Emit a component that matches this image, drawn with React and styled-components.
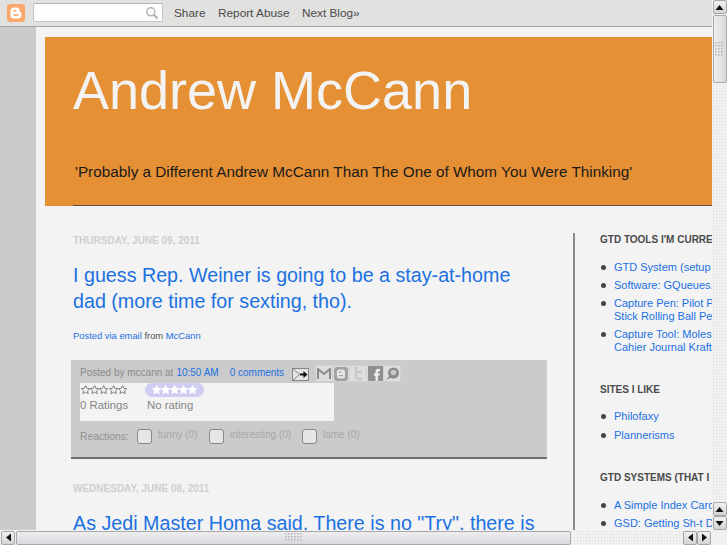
import React from "react";
import styled, { createGlobalStyle } from "styled-components";

const Global = createGlobalStyle`
  html, body { margin: 0; padding: 0; background: #f3f3f3; }
  body { font-family: "Liberation Sans", Arial, sans-serif; }
  a { text-decoration: none; color: inherit; }
`;

const Screen = styled.div`
  position: relative;
  width: 727px;
  height: 545px;
  overflow: hidden;
  display: flex;
  flex-direction: column;
`;

const Navbar = styled.div`
  flex: 0 0 27px;
  box-sizing: border-box;
  height: 27px;
  background: #e1e1e0;
  border-bottom: 1px solid #a2a2a2;
  display: flex;
  align-items: center;
  padding: 0 0 1px 7px;
  color: #4a4a4a;
  font-size: 11.8px;
`;

const Logo = styled.svg`
  width: 18px;
  height: 18px;
  flex: none;
  margin-right: 8px;
`;

const Search = styled.div`
  box-sizing: border-box;
  width: 130px;
  height: 19px;
  background: #fdfdfd;
  border: 1px solid #c4c4c4;
  border-top-color: #b4b4b4;
  border-radius: 2px;
  display: flex;
  justify-content: flex-end;
  align-items: center;
  padding-right: 3px;
  margin-right: 11px;
`;

const NavLink = styled.a`
  margin-right: 12.5px;
  white-space: nowrap;
`;

const Body = styled.div`
  flex: 1;
  display: flex;
  min-height: 0;
`;

const Gutter = styled.div`
  flex: 0 0 36px;
  background: #cbcbcb;
`;

const Page = styled.div`
  flex: 1;
  background: #f3f3f3;
  padding: 10px 0 0 9px;
  min-width: 0;
  overflow: hidden;
`;

const Header = styled.header`
  background: #e69035;
  height: 169px;
  color: #fff;
  display: flex;
  flex-direction: column;
  padding-left: 28px;
`;

const BlogTitle = styled.h1`
  margin: 17px 0 0;
  font-size: 54px;
  line-height: 72px;
  font-weight: 400;
  color: #f3f3f3;
  white-space: nowrap;
`;

const Tagline = styled.p`
  margin: 37px 0 0 2px;
  font-size: 15.3px;
  line-height: 18px;
  color: #1a1a1a;
  white-space: nowrap;
`;

const HeaderRule = styled.div`
  margin-top: auto;
  height: 1px;
  background: #5c5046;
`;

const Columns = styled.div`
  display: flex;
  align-items: flex-start;
  padding-left: 26px;
`;

const Main = styled.main`
  flex: 0 0 476px;
  width: 476px;
  padding-top: 28px;
`;

const DateLine = styled.h2`
  margin: ${(p) => p.$top || 0}px 0 0 2px;
  font-size: 10px;
  line-height: 13px;
  font-weight: 700;
  color: #cfcfcf;
  text-transform: uppercase;
`;

const PostTitle = styled.h3`
  margin: 15px 0 0 2px;
  width: 470px;
  font-size: 19.7px;
  line-height: 26px;
  font-weight: 400;
  color: #1b71e2;
`;

const Via = styled.p`
  margin: 15px 0 0 2px;
  font-size: 9.4px;
  line-height: 13px;
  color: #555;
`;

const Blue = styled.a`
  color: #1b71e2;
`;

const Footer = styled.div`
  box-sizing: border-box;
  height: 99px;
  margin-top: 18px;
  padding: 3px 9px 0;
  background: #cbcbcb;
  border-bottom: 2px solid #6e6e6e;
  color: #8a8a8a;
`;

const MetaRow = styled.div`
  display: flex;
  align-items: center;
  height: 19px;
  font-size: 10px;
  white-space: nowrap;
`;

const MetaLink = styled(Blue)`
  margin-left: ${(p) => p.$gap}px;
`;

const Envelope = styled.svg`
  width: 17px;
  height: 13px;
  margin: 3px 7px 0 8px;
  flex: none;
`;

const ShareGroup = styled.div`
  display: flex;
  margin-top: 2px;
`;

const ShareButton = styled.span`
  box-sizing: border-box;
  width: 18px;
  height: 17px;
  display: flex;
  align-items: center;
  justify-content: center;
  background: #dedede;
  border: 1px solid #d0d0d0;
  margin-left: -1px;
`;

const RatingBox = styled.div`
  box-sizing: border-box;
  width: 254px;
  height: 38px;
  background: #f3f3f3;
  display: grid;
  grid-template-columns: 65px auto;
  padding: 0;
  font-size: 11.4px;
  line-height: 16px;
  color: #858585;
  align-content: start;
  margin-top: 1px;
`;

const Stars = styled.div`
  display: flex;
  align-items: center;
  height: 14px;
  padding-left: 1px;
`;

const Pill = styled.div`
  display: flex;
  align-items: center;
  justify-content: center;
  width: 59px;
  height: 14px;
  border-radius: 7px;
  background: #cfcdf2;
`;

const RatingLabel = styled.span`
  margin-left: ${(p) => p.$left || 0}px;
`;

const Reactions = styled.div`
  display: flex;
  align-items: center;
  height: 16px;
  margin-top: 7px;
  font-size: 10.3px;
  white-space: nowrap;
`;

const ReactionsLabel = styled.span`
  width: 57px;
  color: #909090;
  margin-top: 1px;
`;

const Check = styled.span`
  box-sizing: border-box;
  width: 15px;
  height: 15px;
  border: 1px solid #888;
  border-radius: 3px;
  background: #e6e6e6;
  margin-right: 6px;
  margin-top: 1px;
  flex: none;
`;

const ReactionText = styled.span`
  width: ${(p) => p.$w}px;
  font-size: 10px;
  color: #a8a8a8;
  margin-top: -3px;
`;

const Sidebar = styled.aside`
  flex: none;
  margin: 27px 0 0 26px;
  padding: 0 0 0 25px;
  border-left: 2px solid #8c8c8c;
  white-space: nowrap;
`;

const SideHeading = styled.h4`
  margin: ${(p) => p.$top}px 0 0;
  font-size: 10px;
  line-height: 13px;
  font-weight: 700;
  color: #4a4a4a;
  text-transform: uppercase;
`;

const SideList = styled.ul`
  list-style: none;
  margin: ${(p) => p.$top}px 0 0;
  padding: 0;
`;

const SideItem = styled.li`
  position: relative;
  padding-left: 14px;
  margin-bottom: ${(p) => p.$gap}px;
  font-size: 11px;
  line-height: 13px;
  color: #1b71e2;
  &::before {
    content: "";
    position: absolute;
    left: 0.5px;
    top: 4px;
    width: 5px;
    height: 5px;
    border-radius: 50%;
    background: #444;
  }
`;

/* Scrollbars sit over the page */
const VTrack = styled.div`
  position: absolute;
  right: 0;
  top: 0;
  bottom: 0;
  width: 15px;
  background-color: #f1f1f1;
  background-image: radial-gradient(#dcdcdc 0.6px, transparent 0.7px);
  background-size: 3px 3px;
  display: flex;
  flex-direction: column;
  align-items: center;
`;

const HTrack = styled.div`
  position: absolute;
  left: 0;
  bottom: 0;
  right: 15px;
  height: 15px;
  background-color: #f1f1f1;
  background-image: radial-gradient(#dcdcdc 0.6px, transparent 0.7px);
  background-size: 3px 3px;
  display: flex;
  align-items: center;
  padding-left: 1px;
`;

const Corner = styled.div`
  position: absolute;
  right: 0;
  bottom: 0;
  width: 15px;
  height: 15px;
  background: #f1f1f1;
`;

const ArrowButton = styled.div`
  box-sizing: border-box;
  width: 14px;
  height: 14px;
  flex: none;
  border: 1px solid #a6a6a6;
  border-radius: 2px;
  background: linear-gradient(#f1f1f1, #d4d4d4);
  display: flex;
  align-items: center;
  justify-content: center;
  margin-bottom: ${(p) => p.$mb || 0}px;
  margin-right: ${(p) => p.$mr || 0}px;
`;

const VThumb = styled.div`
  box-sizing: border-box;
  width: 14px;
  height: 68px;
  margin-top: 1px;
  border: 1px solid #a9a9a9;
  border-radius: 2px;
  background: linear-gradient(90deg, #eeeeef, #d9d9dd);
  display: flex;
  align-items: center;
  justify-content: center;
`;

const HThumb = styled.div`
  box-sizing: border-box;
  width: 555px;
  height: 14px;
  margin-left: 1px;
  border: 1px solid #a9a9a9;
  border-radius: 2px;
  background: linear-gradient(#eeeeef, #d9d9dd);
  display: flex;
  align-items: center;
  justify-content: center;
`;

const Grip = styled.svg`
  flex: none;
`;

const Spring = styled.div`
  flex: 1;
`;

const StarIcon = ({ fill, stroke }) => (
  <svg width="9.2" height="9.4" viewBox="0 0 20 20">
    <path
      d="M10 1l2.8 5.9 6.4.8-4.7 4.4 1.2 6.4L10 15.4l-5.7 3.1 1.2-6.4L.8 7.7l6.4-.8z"
      fill={fill}
      stroke={stroke}
      strokeWidth="2"
      strokeLinejoin="round"
    />
  </svg>
);

const Arrow = ({ dir }) => {
  const d = {
    up: "M4.5 2 L8.5 7 L0.5 7 Z",
    down: "M4.5 7 L8.5 2 L0.5 2 Z",
    left: "M2 4.5 L7 0.5 L7 8.5 Z",
    right: "M7 4.5 L2 0.5 L2 8.5 Z",
  }[dir];
  return (
    <svg width="9" height="9" viewBox="0 0 9 9">
      <path d={d} fill="#111" />
    </svg>
  );
};

const gripDots = (cols, rows) => {
  const out = [];
  for (let r = 0; r < rows; r++)
    for (let c = 0; c < cols; c++)
      out.push(<rect key={`${r}-${c}`} x={c * 3} y={r * 3} width="1.5" height="1.5" fill="#b5b5b8" />);
  return out;
};

const posts = {
  tools: [
    ["GTD System (setup guide)"],
    ["Software: GQueues.com for tasks"],
    ["Capture Pen: Pilot Precise V5", "Stick Rolling Ball Pen"],
    ["Capture Tool: Moleskine", "Cahier Journal Kraft"],
  ],
  sites: [["Philofaxy"], ["Plannerisms"]],
  systems: [["A Simple Index Card System"], ["GSD: Getting Sh-t Done"]],
};

const Items = ({ items, gap = 5, top = 15 }) => (
  <SideList $top={top}>
    {items.map((lines) => (
      <SideItem key={lines[0]} $gap={gap}>
        {lines.map((l, i) => (
          <React.Fragment key={l}>
            {i > 0 && <br />}
            {l}
          </React.Fragment>
        ))}
      </SideItem>
    ))}
  </SideList>
);

export default function App() {
  return (
    <Screen>
      <Global />
      <Navbar>
        <Logo viewBox="0 0 18 18">
          <rect width="18" height="18" rx="3" fill="#fda76c" />
          <path
            d="M6.5 3.5h3.2c1.8 0 3 1.2 3 2.8v.9c0 .5.4.8.8.8.5 0 .9.4.9 1v2.6c0 1.7-1.4 3-3.1 3H6.5c-1.7 0-3-1.3-3-3v-5c0-1.7 1.3-3.1 3-3.100z"
            fill="#fff"
          />
          <rect x="6" y="6" width="3.600" height="1.500" rx=".7" fill="#fda76c" />
          <rect x="6" y="10.200" width="6" height="1.500" rx=".7" fill="#fda76c" />
        </Logo>
        <Search>
          <svg width="14" height="14" viewBox="0 0 14 14" fill="none" stroke="#b4b4b4">
            <circle cx="5.800" cy="5.800" r="4" strokeWidth="1.500" />
            <path d="M8.800 8.800 L12.500 12.500" strokeWidth="2.200" />
          </svg>
        </Search>
        <NavLink>Share</NavLink>
        <NavLink>Report Abuse</NavLink>
        <NavLink>Next Blog»</NavLink>
      </Navbar>

      <Body>
        <Gutter />
        <Page>
          <Header>
            <BlogTitle>Andrew McCann</BlogTitle>
            <Tagline>'Probably a Different Andrew McCann Than The One of Whom You Were Thinking'</Tagline>
            <HeaderRule />
          </Header>
          <Columns>
            <Main>
              <DateLine>Thursday, June 09, 2011</DateLine>
              <PostTitle>I guess Rep. Weiner is going to be a stay-at-home dad (more time for sexting, tho).</PostTitle>
              <Via>
                <Blue>Posted via email</Blue> from <Blue>McCann</Blue>
              </Via>
              <Footer>
                <MetaRow>
                  Posted by mccann at
                  <MetaLink $gap={3}>10:50 AM</MetaLink>
                  <MetaLink $gap={11}>0 comments</MetaLink>
                  <Envelope viewBox="0 0 17 13">
                    <rect x=".5" y=".5" width="16" height="12" fill="#e4e4e4" stroke="#858585" />
                    <path d="M1 1l7 5.500M1 12l6-5" fill="none" stroke="#858585" />
                    <path d="M8 5.500h3.500V3l4 3.500-4 3.500V7.500H8z" fill="#111" />
                  </Envelope>
                  <ShareGroup>
                    <ShareButton>
                      <svg width="14" height="11" viewBox="0 0 14 11" fill="none" stroke="#8b8b8b" strokeWidth="2">
                        <path d="M1 11V1l6 5 6-5v10" />
                      </svg>
                    </ShareButton>
                    <ShareButton>
                      <svg width="14" height="14" viewBox="0 0 14 14">
                        <rect width="14" height="14" rx="3" fill="#a2a2a2" />
                        <rect x="3" y="2.500" width="8" height="9" rx="2.500" fill="#e6e6e6" />
                        <rect x="5" y="4.700" width="2.500" height="1.200" fill="#a2a2a2" />
                        <rect x="5" y="8" width="4" height="1.200" fill="#a2a2a2" />
                      </svg>
                    </ShareButton>
                    <ShareButton>
                      <svg width="10" height="14" viewBox="0 0 10 14" fill="none" stroke="#c8c8c8" strokeWidth="2.600">
                        <path d="M3 0v9c0 2 1 3 3 3h3M3 5h6" />
                      </svg>
                    </ShareButton>
                    <ShareButton>
                      <svg width="15" height="15" viewBox="0 0 15 15">
                        <rect width="15" height="15" rx="1" fill="#8f8f8f" />
                        <path d="M12 4H10.500C9.300 4 8.700 4.700 8.700 6V15M6 8.500h5.500" fill="none" stroke="#ececec" strokeWidth="2.400" />
                      </svg>
                    </ShareButton>
                    <ShareButton>
                      <svg width="15" height="14" viewBox="0 0 15 14">
                        <circle cx="8.500" cy="6" r="5.500" fill="#8b8b8b" />
                        <circle cx="8.500" cy="5.500" r="2.800" fill="#c9c9c9" />
                        <path d="M1 13l4-5 2 2z" fill="#8b8b8b" />
                      </svg>
                    </ShareButton>
                  </ShareGroup>
                </MetaRow>
                <RatingBox>
                  <Stars>
                    {[0, 1, 2, 3, 4].map((i) => (
                      <StarIcon key={i} fill="#f3f3f3" stroke="#777" />
                    ))}
                  </Stars>
                  <Pill>
                    {[0, 1, 2, 3, 4].map((i) => (
                      <StarIcon key={i} fill="#fff" stroke="#fff" />
                    ))}
                  </Pill>
                  <RatingLabel>0 Ratings</RatingLabel>
                  <RatingLabel $left={2}>No rating</RatingLabel>
                </RatingBox>
                <Reactions>
                  <ReactionsLabel>Reactions:</ReactionsLabel>
                  <Check />
                  <ReactionText $w={51}>funny (0)</ReactionText>
                  <Check />
                  <ReactionText $w={72}>interesting (0)</ReactionText>
                  <Check />
                  <ReactionText $w={45}>lame (0)</ReactionText>
                </Reactions>
              </Footer>
              <DateLine $top={23}>Wednesday, June 08, 2011</DateLine>
              <PostTitle>As Jedi Master Homa said, There is no "Try", there is only "Do".</PostTitle>
            </Main>
            <Sidebar>
              <SideHeading $top={0}>GTD Tools I'm Currently Using</SideHeading>
              <Items items={posts.tools} />
              <SideHeading $top={29}>Sites I Like</SideHeading>
              <Items items={posts.sites} gap={6} top={14} />
              <SideHeading $top={29}>GTD Systems (That I Use)</SideHeading>
              <Items items={posts.systems} />
            </Sidebar>
          </Columns>
        </Page>
      </Body>

      <VTrack>
        <ArrowButton><Arrow dir="up" /></ArrowButton>
        <VThumb>
          <Grip width="9" height="15" viewBox="0 0 9 15">{gripDots(3, 5)}</Grip>
        </VThumb>
        <Spring />
        <ArrowButton><Arrow dir="up" /></ArrowButton>
        <ArrowButton $mb={15}><Arrow dir="down" /></ArrowButton>
      </VTrack>
      <HTrack>
        <ArrowButton><Arrow dir="left" /></ArrowButton>
        <HThumb>
          <Grip width="18" height="9" viewBox="0 0 18 9">{gripDots(6, 3)}</Grip>
        </HThumb>
        <Spring />
        <ArrowButton><Arrow dir="left" /></ArrowButton>
        <ArrowButton $mr={1}><Arrow dir="right" /></ArrowButton>
      </HTrack>
      <Corner />
    </Screen>
  );
}
